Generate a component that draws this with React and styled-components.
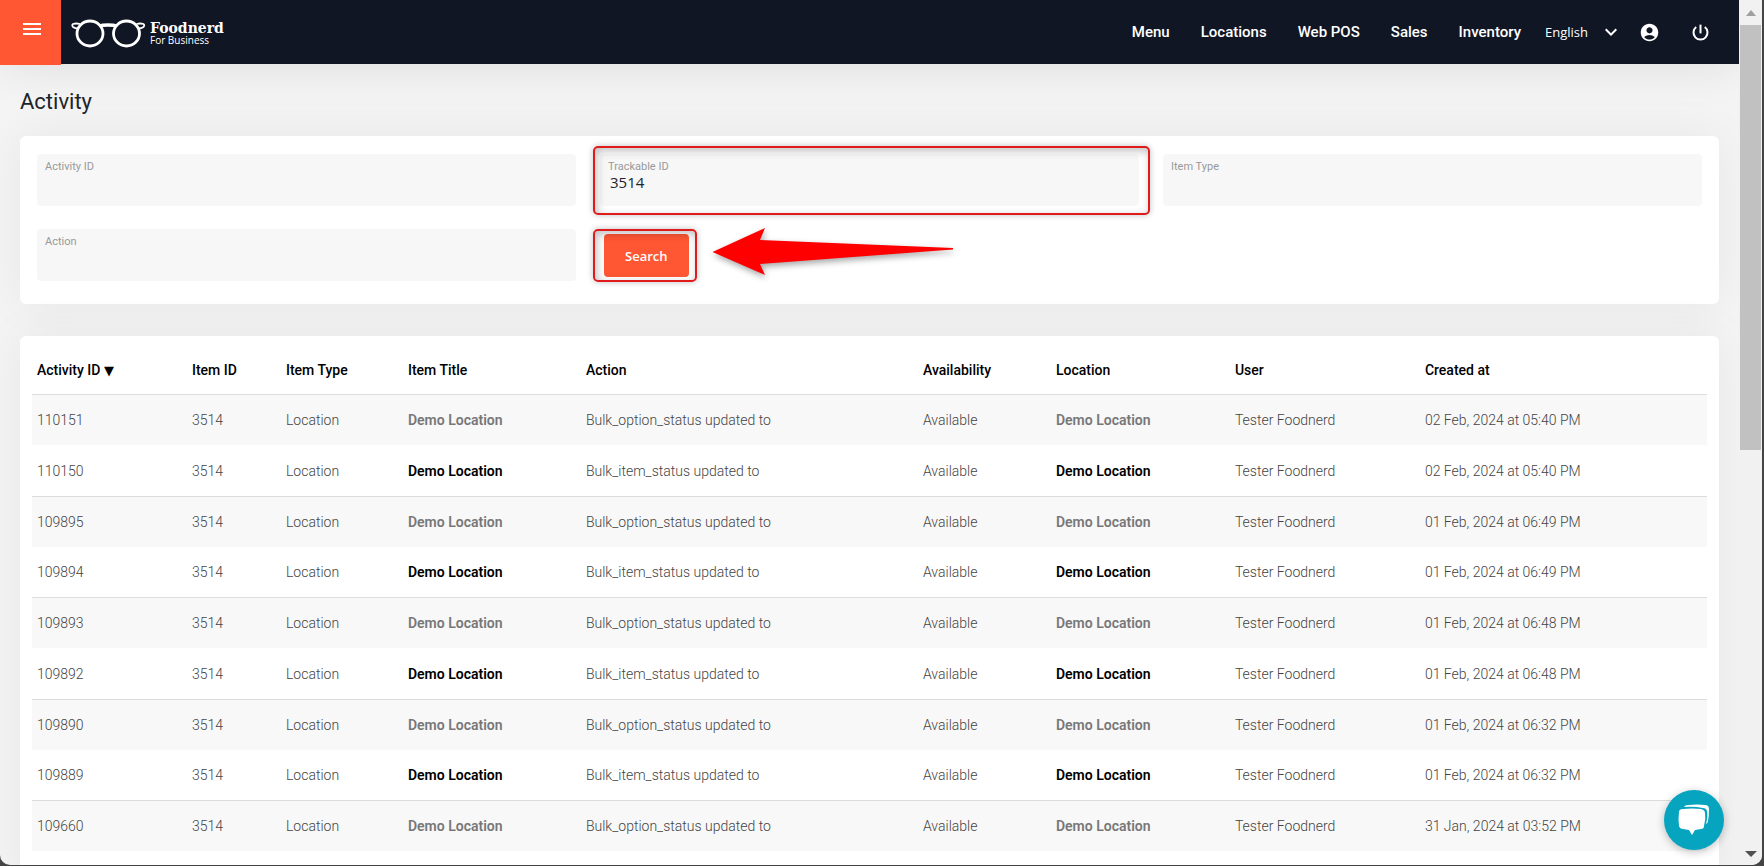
import React from "react";
import styled, { createGlobalStyle } from "styled-components";
import { MdAccountCircle, MdKeyboardArrowDown, MdMenu } from "react-icons/md";

const navLinks = ["Menu", "Locations", "Web POS", "Sales", "Inventory"];

const columns = [
  { title: "Activity ID", width: 155, sorted: true },
  { title: "Item ID", width: 94 },
  { title: "Item Type", width: 122 },
  { title: "Item Title", width: 178 },
  { title: "Action", width: 337 },
  { title: "Availability", width: 133 },
  { title: "Location", width: 179 },
  { title: "User", width: 190 },
  { title: "Created at", width: 287 },
];

const tableWidth = columns.reduce((sum, column) => sum + column.width, 0);

const activities = [
  { id: 110151, kind: "option", date: "02 Feb, 2024 at 05:40 PM" },
  { id: 110150, kind: "item", date: "02 Feb, 2024 at 05:40 PM" },
  { id: 109895, kind: "option", date: "01 Feb, 2024 at 06:49 PM" },
  { id: 109894, kind: "item", date: "01 Feb, 2024 at 06:49 PM" },
  { id: 109893, kind: "option", date: "01 Feb, 2024 at 06:48 PM" },
  { id: 109892, kind: "item", date: "01 Feb, 2024 at 06:48 PM" },
  { id: 109890, kind: "option", date: "01 Feb, 2024 at 06:32 PM" },
  { id: 109889, kind: "item", date: "01 Feb, 2024 at 06:32 PM" },
  { id: 109660, kind: "option", date: "31 Jan, 2024 at 03:52 PM" },
];

const Logo = () => (
  <LogoLink href="#home">
    <svg width="75" height="32" viewBox="0 0 75 32" fill="none" stroke="#fff">
      <ellipse cx="19" cy="17.500" rx="13" ry="12.500" strokeWidth="2.800" />
      <ellipse cx="55.500" cy="17.500" rx="13" ry="12.500" strokeWidth="2.800" />
      <path d="M29 10 Q31 9 37 9 Q43 9 45.500 10" strokeWidth="3.600" />
      <path
        d="M9 8 Q5 7 2 8 Q0.500 9 2 11 Q4 12.500 7 12.500 M65.500 8 Q69.500 7 72.500 8 Q74 9 72.500 11 Q70.500 12.500 67.500 12.500"
        strokeWidth="1.800"
      />
    </svg>
    <LogoText>
      <strong>Foodnerd</strong>
      <span>For Business</span>
    </LogoText>
  </LogoLink>
);

const PowerIcon = () => (
  <svg width="21" height="21" viewBox="0 0 24 24" fill="none" stroke="currentColor" strokeWidth="2.300">
    <path d="M12 3 V13" />
    <path d="M7.100 5.800 A8 8 0 1 0 16.900 5.800" />
  </svg>
);

const Header = () => (
  <TopBar>
    <MenuButton type="button" aria-label="Toggle menu">
      <MdMenu size={24} />
    </MenuButton>
    <Logo />
    <Nav>
      {navLinks.map((link) => (
        <NavLink key={link} href={`#${link}`}>
          {link}
        </NavLink>
      ))}
    </Nav>
    <Language>
      <select aria-label="Language" defaultValue="English">
        <option>English</option>
      </select>
      <MdKeyboardArrowDown size={24} />
    </Language>
    <IconLink href="#account" aria-label="Account">
      <MdAccountCircle size={21} />
    </IconLink>
    <IconLink href="#logout" aria-label="Log out">
      <PowerIcon />
    </IconLink>
  </TopBar>
);

const FilterField = ({ id, label, value, marked }) => (
  <Field>
    <label htmlFor={id}>{label}</label>
    <input id={id} type="text" defaultValue={value} />
    {marked && <Marker $inset="-8px -11px -9px -7px" />}
  </Field>
);

const Arrow = () => (
  <ArrowDrawing viewBox="0 0 244 52" width="244" height="52">
    <path d="M0.500 26 L53 2 L48 14 L241 22 L241 23.500 L48 38 L53 49 Z" fill="#fe0000" />
  </ArrowDrawing>
);

const Filters = () => (
  <FilterCard>
    <FilterField id="activity-id" label="Activity ID" />
    <FilterField id="trackable-id" label="Trackable ID" value="3514" marked />
    <FilterField id="item-type" label="Item Type" />
    <FilterField id="action" label="Action" />
    <SearchCell>
      <SearchButton type="submit">Search</SearchButton>
      <Marker $inset="-5px -8px -5px -11px" />
      <Arrow />
    </SearchCell>
  </FilterCard>
);

const ActivityTable = () => (
  <TableCard>
    <Table>
      <colgroup>
        {columns.map((column) => (
          <col key={column.title} style={{ width: `${(column.width / tableWidth) * 100}%` }} />
        ))}
      </colgroup>
      <thead>
        <tr>
          {columns.map((column) => (
            <th key={column.title}>
              {column.title} {column.sorted && <SortMark>▼</SortMark>}
            </th>
          ))}
        </tr>
      </thead>
      <tbody>
        {activities.map((activity) => (
          <tr key={activity.id}>
            <td>{activity.id}</td>
            <td>3514</td>
            <td>Location</td>
            <td>
              <a href="#location">Demo Location</a>
            </td>
            <td>Bulk_{activity.kind}_status updated to</td>
            <td>Available</td>
            <td>
              <a href="#location">Demo Location</a>
            </td>
            <td>Tester Foodnerd</td>
            <td>{activity.date}</td>
          </tr>
        ))}
      </tbody>
    </Table>
  </TableCard>
);

const App = () => {
  return (
    <>
      <GlobalStyle />
      <Window>
        <Page>
          <Header />
          <Content>
            <Title>Activity</Title>
            <Filters />
            <ActivityTable />
          </Content>
        </Page>
        <Scrollbar>
          <svg width="12" height="7" viewBox="0 0 12 7">
            <path d="M1 7 L6 1 L11 7 Z" fill="#a0a0a0" />
          </svg>
          <Thumb />
          <svg width="12" height="7" viewBox="0 0 12 7">
            <path d="M0 0 L12 0 L6 6 Z" fill="#505050" />
          </svg>
        </Scrollbar>
        <ChatButton type="button" aria-label="Open chat">
          <svg width="32" height="32" viewBox="0 0 32 32" fill="#fff">
            <path d="M6 3 Q7 1 10 1 Q20 0 27 1 Q31 1 31 5 Q31 12 30 17 Q30 19 28 20 Q30 12 29 7 Q28 4 25 4 Q16 2 6 3 Z" />
            <path d="M5 5 Q14 4 23 5 Q27 6 27 9 Q28 15 26 22 Q26 25 23 25 L17 26 L14 31 L11 26 L5 25 Q2 25 1 22 Q0 15 1 8 Q1 5 5 5 Z" />
          </svg>
        </ChatButton>
      </Window>
    </>
  );
};

const GlobalStyle = createGlobalStyle`
  * {
    box-sizing: border-box;
  }
  body {
    margin: 0;
    background: #444;
    font-family: Roboto, sans-serif;
    overflow: hidden;
  }
  a {
    color: inherit;
    text-decoration: none;
  }
`;

const Window = styled.div`
  display: flex;
  height: calc(100vh - 1px);
  margin-right: 2px;
  background: #f4f4f4;
  border-radius: 0 0 10px 10px;
  overflow: hidden;
`;

const Page = styled.div`
  flex: 1;
  min-width: 0;
  overflow: hidden;
`;

const TopBar = styled.header`
  position: relative;
  display: flex;
  align-items: center;
  height: 64px;
  padding-right: 18px;
  background: #101624;
  color: #fff;
  box-shadow: 0 0 50px rgba(0, 0, 0, 0.1);
`;

const MenuButton = styled.button`
  align-self: flex-start;
  flex: none;
  display: flex;
  justify-content: center;
  width: 61px;
  height: 65px;
  padding: 17px 0 0 2px;
  border: 0;
  background: #ff5733;
  color: #fff;
`;

const LogoLink = styled.a`
  display: flex;
  align-items: center;
  gap: 4px;
  margin-left: 10px;
`;

const LogoText = styled.span`
  display: flex;
  flex-direction: column;
  padding-top: 2px;
  font: 10px/11px "Open Sans", sans-serif;
  strong {
    font: bold 14px/14px "DejaVu Serif", serif;
  }
`;

const Nav = styled.nav`
  display: flex;
  gap: 31px;
  margin-left: auto;
`;

const NavLink = styled.a`
  font-size: 15px;
  font-weight: 500;
`;

const Language = styled.div`
  display: flex;
  align-items: center;
  gap: 11px;
  margin: 0 6px 0 24px;
  select {
    appearance: none;
    padding: 0;
    border: 0;
    background: none;
    color: #fff;
    font: 13px "Open Sans", sans-serif;
  }
`;

const IconLink = styled.a`
  display: flex;
  padding: 0 10px;
  & + & {
    margin-left: 10px;
  }
`;

const Content = styled.main`
  padding: 0 20px;
`;

const Title = styled.h1`
  margin: 0;
  padding: 25px 0 21px;
  color: #212529;
  font-size: 22px;
  font-weight: 400;
  line-height: 26px;
`;

const Card = styled.div`
  background: #fff;
  border-radius: 6px;
  box-shadow: 0 0 50px rgba(0, 0, 0, 0.06);
`;

const FilterCard = styled(Card).attrs({ as: "form" })`
  display: grid;
  grid-template-columns: repeat(3, 1fr);
  gap: 23px 24px;
  margin-bottom: 32px;
  padding: 18px 17px 23px;
`;

const Field = styled.div`
  position: relative;
  display: flex;
  flex-direction: column;
  height: 52px;
  padding: 6px 8px;
  border-radius: 4px;
  background: #f7f7f7;
  label {
    color: #999;
    font-size: 11px;
    line-height: 14px;
  }
  input {
    width: 100%;
    padding: 0 2px;
    border: 0;
    outline: 0;
    background: none;
    color: #212529;
    font: 15px/17px "Open Sans", sans-serif;
  }
`;

const Marker = styled.span`
  position: absolute;
  inset: ${(props) => props.$inset};
  border: 2px solid #e01b1b;
  border-radius: 5px;
  box-shadow: 0 0 6px rgba(0, 0, 0, 0.25), inset 2px 3px 8px rgba(0, 0, 0, 0.25);
  pointer-events: none;
`;

const SearchCell = styled.div`
  position: relative;
  justify-self: start;
  align-self: start;
  margin: 5px 0 0 4px;
`;

const SearchButton = styled.button`
  display: block;
  height: 43px;
  padding: 0 21px;
  border: 0;
  border-radius: 4px;
  background: #ff5733;
  color: #fff;
  font: 600 13px "Open Sans", sans-serif;
`;

const ArrowDrawing = styled.svg`
  position: absolute;
  left: 108px;
  top: -8px;
  filter: drop-shadow(1px 3px 3px rgba(0, 0, 0, 0.35));
`;

const TableCard = styled(Card)`
  padding: 7px 12px 40px;
`;

const Table = styled.table`
  width: 100%;
  table-layout: fixed;
  border-collapse: collapse;
  font-size: 14px;
  white-space: nowrap;
  th,
  td {
    height: 51px;
    padding: 1px 5px 0;
    color: #444;
    font-weight: 300;
    text-align: left;
  }
  th {
    padding-top: 3px;
    color: #000;
    font-weight: 500;
  }
  a {
    color: #777;
    font-weight: 600;
  }
  tbody tr:nth-child(odd) {
    border-top: 1px solid #dcdcdc;
    background: #f8f8f8;
  }
  tbody tr:nth-child(4n) td {
    height: 50px;
  }
  tbody tr:nth-child(even) a {
    color: #000;
  }
`;

const SortMark = styled.span`
  font: 13px/14px "DejaVu Sans", sans-serif;
`;

const Scrollbar = styled.div`
  display: flex;
  flex-direction: column;
  align-items: center;
  width: 23px;
  padding: 9px 0 7px;
  background: #f1f1f1;
`;

const Thumb = styled.div`
  width: 21px;
  height: 50%;
  margin: 9px 0 auto;
  background: #c1c1c1;
`;

const ChatButton = styled.button`
  position: fixed;
  right: 40px;
  bottom: 16px;
  display: flex;
  align-items: center;
  justify-content: center;
  width: 60px;
  height: 60px;
  padding: 0;
  border: 0;
  border-radius: 50%;
  background: #06a4bf;
  box-shadow: 0 2px 8px rgba(0, 0, 0, 0.25);
`;

export default App;
